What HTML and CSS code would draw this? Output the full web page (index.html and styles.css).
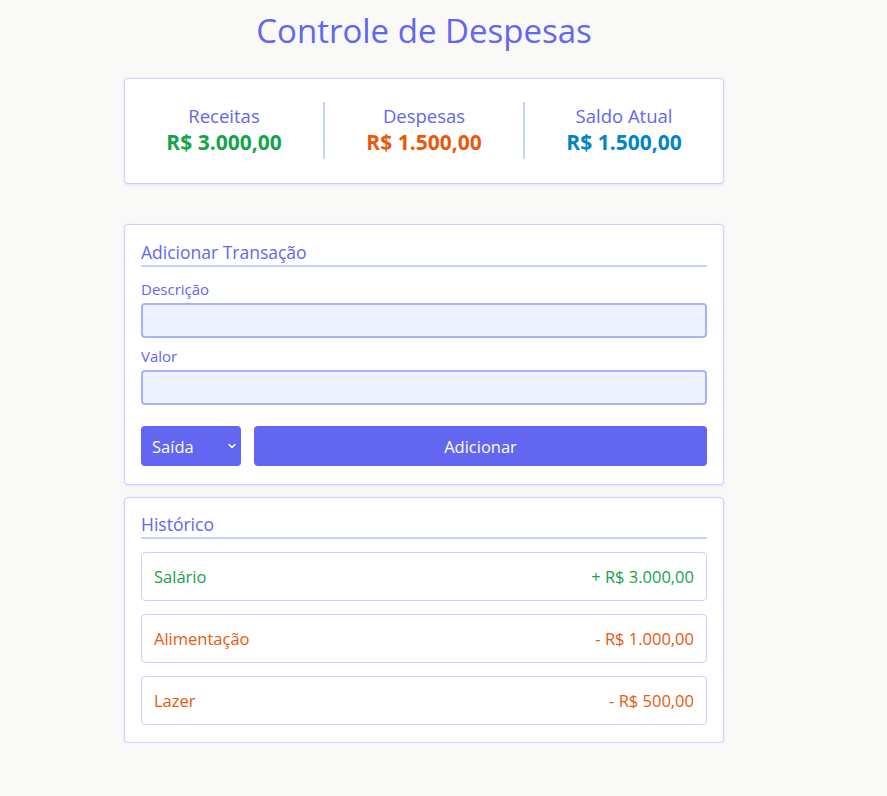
FILE: index.html
```html
<!DOCTYPE html>
<html lang="pt-BR">
<head>
<meta charset="utf-8">
<title>Controle de Despesas</title>
<link rel="stylesheet" href="styles.css">
</head>
<body>
<div class="page">
  <main class="app">
    <h1 class="title">Controle de Despesas</h1>

    <section class="card summary">
      <div class="sum-item">
        <div class="sum-label">Receitas</div>
        <div class="sum-value income">R$ 3.000,00</div>
      </div>
      <div class="sum-item">
        <div class="sum-label">Despesas</div>
        <div class="sum-value expense">R$ 1.500,00</div>
      </div>
      <div class="sum-item">
        <div class="sum-label">Saldo Atual</div>
        <div class="sum-value balance">R$ 1.500,00</div>
      </div>
    </section>

    <section class="card form-card">
      <h2 class="card-title">Adicionar Transação</h2>
      <label class="field-label">Descrição</label>
      <input class="field-input" type="text">
      <label class="field-label">Valor</label>
      <input class="field-input" type="text">
      <div class="actions">
        <div class="select-wrap">
          <select class="type-select"><option>Saída</option><option>Entrada</option></select>
          <svg class="chev" width="10" height="10" viewBox="0 0 10 10"><path d="M2 3.5 L5 6.5 L8 3.5" fill="none" stroke="#fff" stroke-width="1.6" stroke-linecap="round" stroke-linejoin="round"/></svg>
        </div>
        <button class="add-btn">Adicionar</button>
      </div>
    </section>

    <section class="card history">
      <h2 class="card-title">Histórico</h2>
      <ul class="tx-list">
        <li class="tx income"><span>Salário</span><span>+ R$ 3.000,00</span></li>
        <li class="tx expense"><span>Alimentação</span><span>- R$ 1.000,00</span></li>
        <li class="tx expense"><span>Lazer</span><span>- R$ 500,00</span></li>
      </ul>
    </section>
  </main>
</div>
</body>
</html>
```

FILE: styles.css
```css
* { box-sizing: border-box; }
body {
  margin: 0;
  background: #f9f9f8;
  font-family: "Open Sans", "Noto Sans", sans-serif;
}
.page { width: 848px; }
.app {
  width: 600px;
  margin: 0 auto;
  padding-top: 11px;
}
.title {
  margin: 0 0 27px;
  text-align: center;
  font-size: 33px;
  font-weight: 500;
  color: #6366f1;
  line-height: 40px;
}
.card {
  background: #fff;
  border: 1px solid #c7d2fe;
  border-radius: 4px;
  box-shadow: 0 1px 3px rgba(99, 102, 241, 0.15);
}
.summary {
  display: flex;
  padding: 23px 0 24px;
  margin-bottom: 40px;
}
.sum-item {
  flex: 1;
  text-align: center;
  border-left: 2px solid #c7d2fe;
  padding: 1px 0 0;
  height: 57px;
}
.sum-item:first-child { border-left: none; }
.sum-label {
  font-size: 18.5px;
  color: #6366f1;
  line-height: 25px;
}
.sum-value {
  font-size: 21px;
  font-weight: 700;
  line-height: 28px;
}
.income { color: #16a34a; }
.expense { color: #ea580c; }
.balance { color: #0284c7; }

.form-card {
  padding: 15px 16px 18px;
  margin-bottom: 12px;
}
.card-title {
  margin: 0 0 12px;
  font-size: 17.5px;
  font-weight: 500;
  color: #6366f1;
  line-height: 25px;
  padding-bottom: 0;
  border-bottom: 2px solid #c7d2fe;
}
.field-label {
  display: block;
  font-size: 15px;
  color: #6366f1;
  line-height: 20px;
  margin-bottom: 4px;
}
.field-input {
  display: block;
  width: 100%;
  height: 35px;
  background: #eef2ff;
  border: 2px solid #a5b4fc;
  border-radius: 4px;
  margin-bottom: 8px;
  font: inherit;
}
.actions {
  display: flex;
  gap: 13px;
  margin-top: 21px;
}
.select-wrap {
  position: relative;
  width: 100px;
  flex: none;
}
.type-select {
  appearance: none;
  -webkit-appearance: none;
  width: 100%;
  height: 40px;
  background: #6366f1;
  color: #fff;
  border: none;
  border-radius: 4px;
  padding: 0 11px;
  font: inherit;
  font-size: 16.5px;
}
.chev {
  position: absolute;
  right: 4px;
  top: 15px;
  pointer-events: none;
}
.add-btn {
  flex: 1;
  height: 40px;
  background: #6366f1;
  color: #fff;
  border: none;
  border-radius: 4px;
  font: inherit;
  font-size: 16.5px;
}

.history {
  padding: 14px 16px 17px;
}
.history .card-title { margin-bottom: 13px; }
.tx-list {
  list-style: none;
  margin: 0;
  padding: 0;
  display: flex;
  flex-direction: column;
  gap: 13px;
}
.tx {
  display: flex;
  justify-content: space-between;
  align-items: center;
  height: 49px;
  padding: 0 12px;
  border: 1px solid #c7d2fe;
  border-radius: 4px;
  font-size: 16.5px;
}
```
